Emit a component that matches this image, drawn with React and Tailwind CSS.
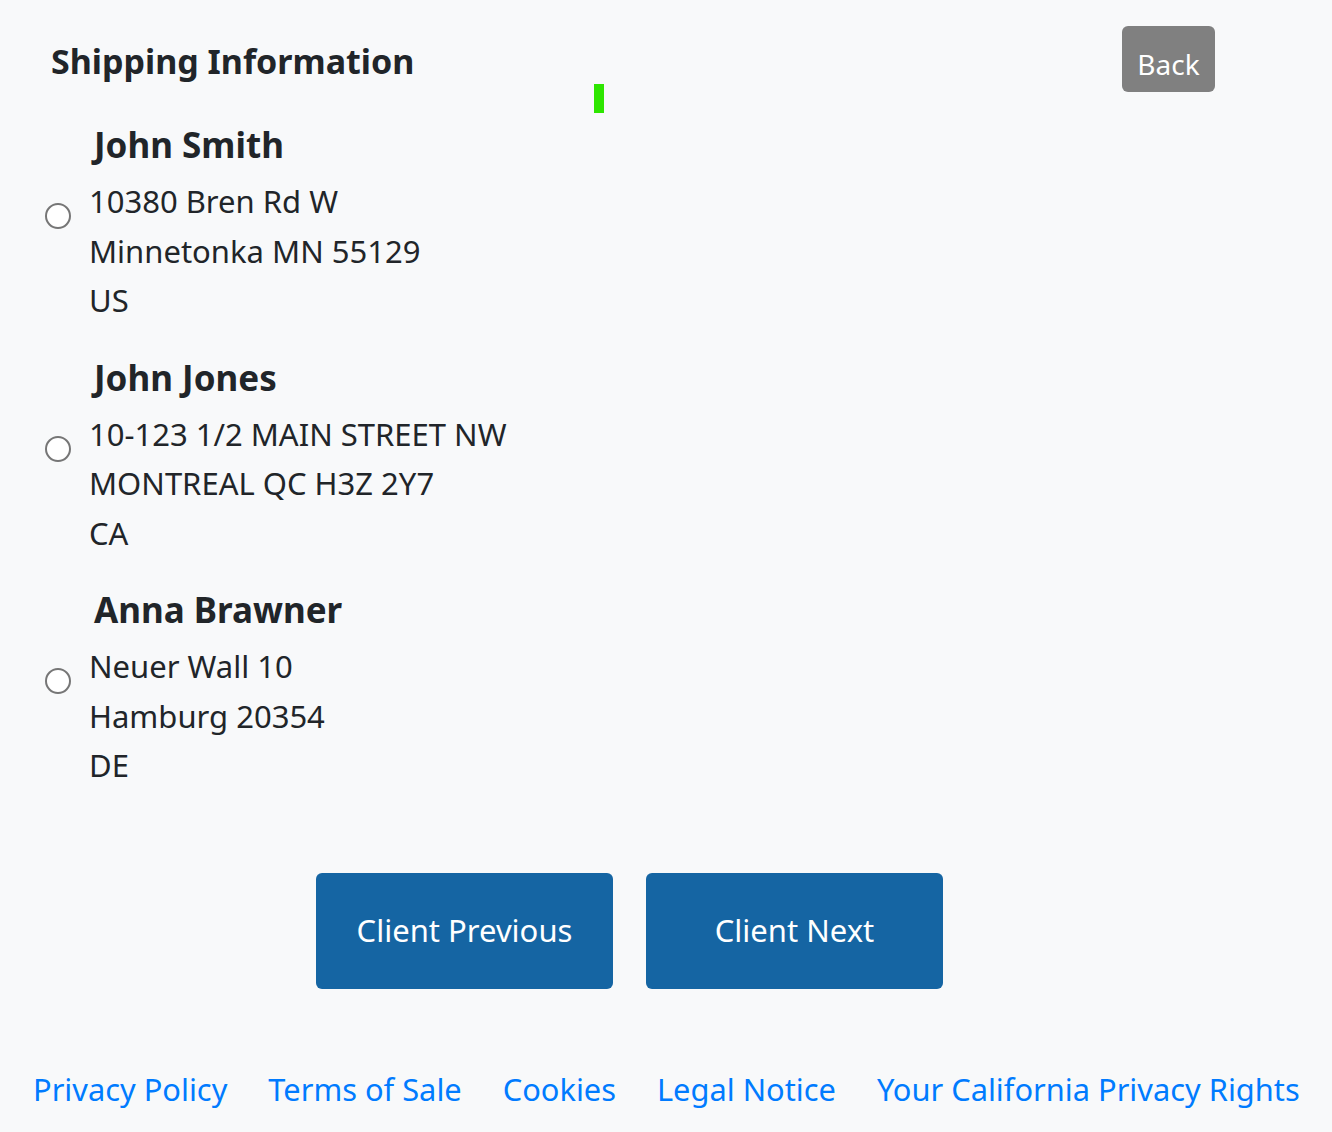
import React from "react";

const addresses = [
  { name: "John Smith", lines: ["10380 Bren Rd W", "Minnetonka MN 55129", "US"] },
  { name: "John Jones", lines: ["10-123 1/2 MAIN STREET NW", "MONTREAL QC H3Z 2Y7", "CA"] },
  { name: "Anna Brawner", lines: ["Neuer Wall 10", "Hamburg 20354", "DE"] },
];

const links = ["Privacy Policy", "Terms of Sale", "Cookies", "Legal Notice", "Your California Privacy Rights"];

export default function App() {
  return (
    <div className="min-h-[1132px] bg-[#f8f9fa] text-[#212529] font-['Noto_Sans',sans-serif]">
      {/* header */}
      <div className="flex items-start pl-[51px] pr-[117px] pt-[26px]">
        <h2 className="mt-[10px] text-[34px] font-bold leading-[50px]">Shipping Information</h2>
        <div className="ml-[180px] mt-[58px] h-[29px] w-[10px] bg-[#2ee600]" />
        <button className="ml-auto h-[66px] w-[93px] rounded-[6px] bg-[#808080] pt-[10px] text-[28px] text-white">
          Back
        </button>
      </div>

      {/* address list */}
      <div className="mt-[7px] pl-[45px]">
        {addresses.map((a) => (
          <div key={a.name} className="mb-[27px]">
            <div className="pl-[49px] text-[35px] font-bold leading-[50px]">{a.name}</div>
            <label className="mt-[7px] flex items-start">
              <span className="mt-[26px] h-[26px] w-[26px] shrink-0 rounded-full border-2 border-[#767676] bg-white" />
              <div className="ml-[18px] text-[31px] leading-[49.5px]">
                {a.lines.map((l) => (
                  <div key={l}>{l}</div>
                ))}
              </div>
            </label>
          </div>
        ))}
      </div>

      {/* client nav */}
      <div className="mt-[82px] flex justify-center gap-[33px] pr-[73px]">
        <button className="h-[116px] w-[297px] rounded-[6px] bg-[#1565a3] text-[31px] text-white">Client Previous</button>
        <button className="h-[116px] w-[297px] rounded-[6px] bg-[#1565a3] text-[31px] text-white">Client Next</button>
      </div>

      {/* footer */}
      <div className="mt-[80px] flex gap-[41px] pl-[33px] text-[30.8px] leading-[40px] text-[#007bff]">
        {links.map((l) => (
          <a key={l} href="#">{l}</a>
        ))}
      </div>
    </div>
  );
}
